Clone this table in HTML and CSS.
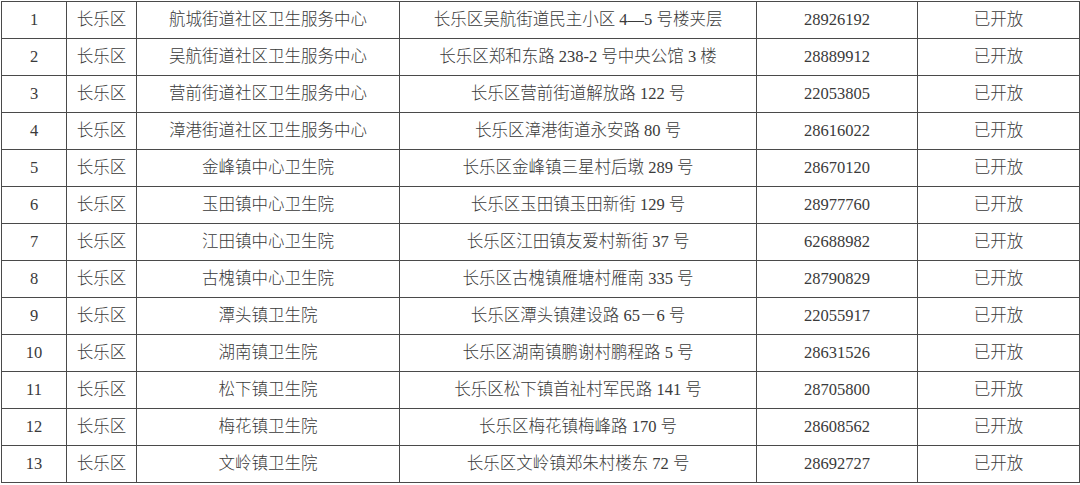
FILE: index.html
```html
<!DOCTYPE html>
<html lang="zh-CN">
<head>
<meta charset="utf-8">
<title>长乐区卫生服务机构</title>
<link rel="stylesheet" href="styles.css">
</head>
<body>
<table class="grid">
<colgroup>
<col class="c-no"><col class="c-dist"><col class="c-name"><col class="c-addr"><col class="c-tel"><col class="c-state">
</colgroup>
<tbody>
<tr><td>1</td><td>长乐区</td><td>航城街道社区卫生服务中心</td><td>长乐区吴航街道民主小区 4—5 号楼夹层</td><td>28926192</td><td>已开放</td></tr>
<tr><td>2</td><td>长乐区</td><td>吴航街道社区卫生服务中心</td><td>长乐区郑和东路 238-2 号中央公馆 3 楼</td><td>28889912</td><td>已开放</td></tr>
<tr><td>3</td><td>长乐区</td><td>营前街道社区卫生服务中心</td><td>长乐区营前街道解放路 122 号</td><td>22053805</td><td>已开放</td></tr>
<tr><td>4</td><td>长乐区</td><td>漳港街道社区卫生服务中心</td><td>长乐区漳港街道永安路 80 号</td><td>28616022</td><td>已开放</td></tr>
<tr><td>5</td><td>长乐区</td><td>金峰镇中心卫生院</td><td>长乐区金峰镇三星村后墩 289 号</td><td>28670120</td><td>已开放</td></tr>
<tr><td>6</td><td>长乐区</td><td>玉田镇中心卫生院</td><td>长乐区玉田镇玉田新街 129 号</td><td>28977760</td><td>已开放</td></tr>
<tr><td>7</td><td>长乐区</td><td>江田镇中心卫生院</td><td>长乐区江田镇友爱村新街 37 号</td><td>62688982</td><td>已开放</td></tr>
<tr><td>8</td><td>长乐区</td><td>古槐镇中心卫生院</td><td>长乐区古槐镇雁塘村雁南 335 号</td><td>28790829</td><td>已开放</td></tr>
<tr><td>9</td><td>长乐区</td><td>潭头镇卫生院</td><td>长乐区潭头镇建设路 65－6 号</td><td>22055917</td><td>已开放</td></tr>
<tr><td>10</td><td>长乐区</td><td>湖南镇卫生院</td><td>长乐区湖南镇鹏谢村鹏程路 5 号</td><td>28631526</td><td>已开放</td></tr>
<tr><td>11</td><td>长乐区</td><td>松下镇卫生院</td><td>长乐区松下镇首祉村军民路 141 号</td><td>28705800</td><td>已开放</td></tr>
<tr><td>12</td><td>长乐区</td><td>梅花镇卫生院</td><td>长乐区梅花镇梅峰路 170 号</td><td>28608562</td><td>已开放</td></tr>
<tr><td>13</td><td>长乐区</td><td>文岭镇卫生院</td><td>长乐区文岭镇郑朱村楼东 72 号</td><td>28692727</td><td>已开放</td></tr>
</tbody>
</table>
</body>
</html>
```
FILE: styles.css
```css
html, body {
  margin: 0;
  padding: 0;
  background: #ffffff;
}
body {
  padding: 1px 0 0 1px;
}
.grid {
  border-collapse: collapse;
  table-layout: fixed;
  width: 1078px;
  font-family: "Liberation Serif", "Noto Sans CJK SC", serif;
  font-size: 16.5px;
  font-weight: 300;
  color: #3a3a3a;
}
.grid td {
  border: 1px solid #4a4a4a;
  height: 36px;
  padding: 0;
  text-align: center;
  vertical-align: middle;
  white-space: nowrap;
  line-height: 20px;
}
.c-no { width: 65px; }
.c-dist { width: 70px; }
.c-name { width: 263px; }
.c-addr { width: 357px; }
.c-tel { width: 161px; }
.c-state { width: 162px; }
```
